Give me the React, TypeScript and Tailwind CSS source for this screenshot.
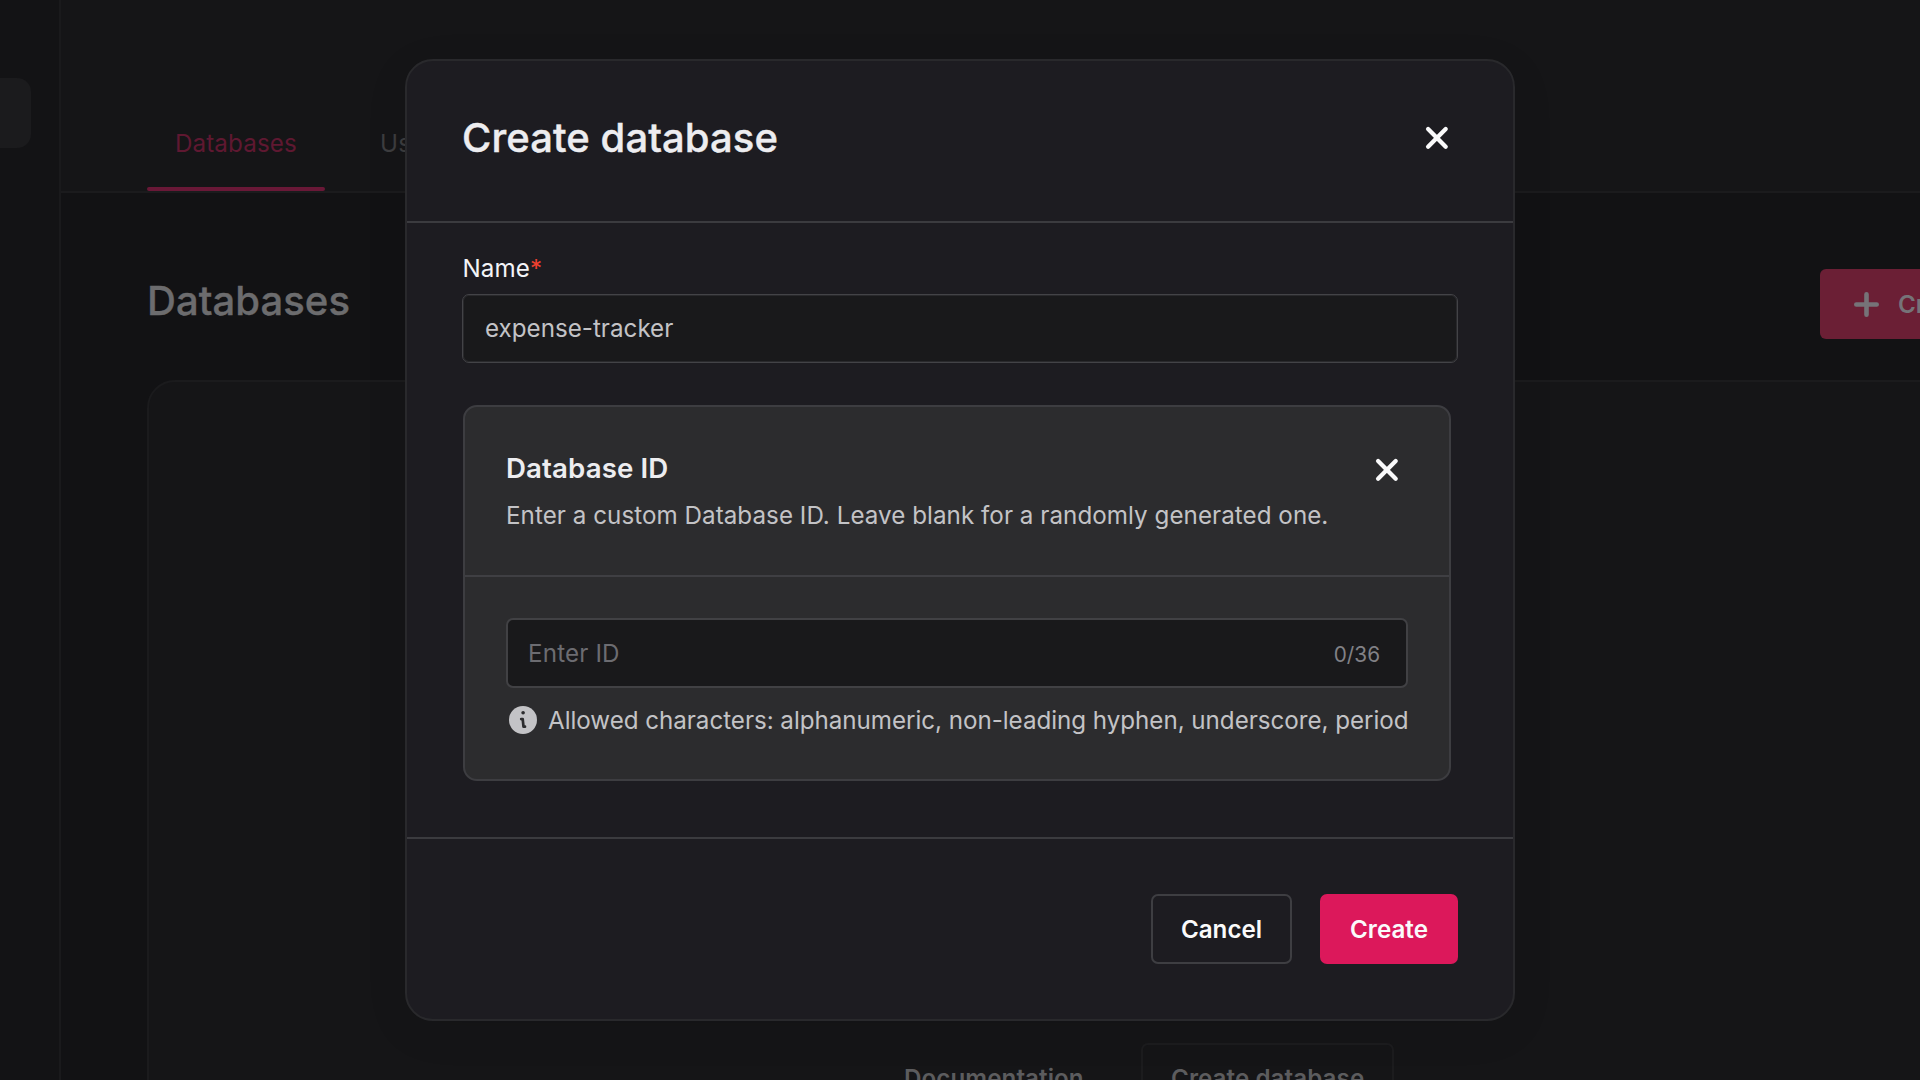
import React from 'react';

function Cross() {
  return (
    <svg width="24" height="24" viewBox="0 0 24 24" fill="none" stroke="#fafafb" strokeWidth="4.3" strokeLinecap="round">
      <path d="M3.1 3.1 20.7 20.7M20.7 3.1 3.1 20.7" />
    </svg>
  );
}

function Info() {
  return (
    <svg width="28" height="28" viewBox="0 0 28 28" fill="none">
      <circle cx="14" cy="14" r="14" fill="#c3c3c6" />
      <circle cx="14.1" cy="6.8" r="1.8" fill="#2c2c2e" />
      <path d="M12.2 13.1h1.5l.8 7.6h1.5" stroke="#2c2c2e" strokeWidth="2.7" strokeLinecap="round" strokeLinejoin="round" />
    </svg>
  );
}

function Page() {
  return (
    <div className="flex h-full w-full overflow-hidden">
      <aside className="h-full w-[61px] shrink-0 border-r-2 border-[#1a1a1c] bg-[#131315] pt-[78px]">
        <div className="h-[70px] w-[31px] rounded-r-[14px] bg-[#1b1b1d]" />
      </aside>
      <main className="flex min-w-0 flex-1 flex-col bg-[#121214]">
        <header className="flex h-[193px] shrink-0 items-end border-b-2 border-[#1b1b1d] bg-[#151517] pl-[86px]">
          <div className="flex h-[64px] w-[178px] flex-col justify-between">
            <span className="pl-[28px] text-[24.2px] leading-[34px] tracking-[0.1px] text-[#5f1831]">Databases</span>
            <span className="h-[4px] rounded-full bg-[#691837]" />
          </div>
          <span className="ml-[55px] h-[64px] text-[24.2px] leading-[34px] tracking-[0.2px] text-[#3d3d3f]">Usage</span>
        </header>
        <div className="flex h-[187px] w-[1900px] shrink-0 items-start pl-[86px]">
          <h2 className="w-[1673px] shrink-0 pt-[84px] text-[40px] leading-[48px] font-medium tracking-[0.05px] text-[#6c6c6e] [-webkit-text-stroke:0.4px_#6c6c6e]">Databases</h2>
          <button className="mt-[76px] flex h-[70px] shrink-0 items-center rounded-[6px] bg-[#6b1f35] pl-[34px] text-[24.2px] font-semibold text-[#767378]">
            <svg width="25" height="25" viewBox="0 0 25 25" fill="none" stroke="#767378" strokeWidth="4.6" strokeLinecap="round">
              <path d="M12.5 2.3v20.4M2.3 12.5h20.4" />
            </svg>
            <span className="ml-[19px] w-56 pt-[2px] text-left whitespace-nowrap">Create database</span>
          </button>
        </div>
        <section className="ml-[86px] flex h-[900px] w-[1900px] shrink-0 items-start rounded-tl-[28px] border-2 border-[#1b1b1d] bg-[#151517] pt-[661px] pl-[755px] text-[24.2px] leading-[34px] font-semibold tracking-[0.06px] text-[#5c5c5e]">
          <span className="mt-[19px] w-[237px]">Documentation</span>
          <span className="h-[70px] w-[253px] rounded-[7px] border-2 border-[#1c1c1e] pt-[17px] pl-[28px]">Create database</span>
        </section>
      </main>
    </div>
  );
}

export default function App() {
  return (
    <div className="relative h-[1080px] w-full overflow-hidden bg-[#121214] font-['Inter',sans-serif]">
      <Page />
      <div className="absolute inset-0 flex items-start justify-center pt-[59px]">
        <div className="flex h-[962px] w-[1110px] flex-col rounded-[28px] border-2 border-[#29292c] bg-[#1d1c21] shadow-[0_10px_44px_rgba(0,0,0,0.08)]">
          <div className="flex h-[162px] shrink-0 items-start justify-between border-b-2 border-[#3b3b3f] pr-[64px] pl-[55px]">
            <h1 className="mt-[53px] text-[40px] leading-[48px] font-medium tracking-[0.08px] text-[#ededf0] [-webkit-text-stroke:0.4px_#ededf0]">Create database</h1>
            <button className="mt-[65px]"><Cross /></button>
          </div>
          <div className="flex h-[616px] shrink-0 flex-col border-b-2 border-[#3b3b3f] px-[55px] pt-[29px]">
            <label className="pl-[0.5px] text-[24.2px] leading-[34px] tracking-[0.1px] text-[#f4f4f7]">
              Name<span className="text-[#f0402f]">*</span>
            </label>
            <div className="mt-[8px] flex h-[69px] items-center rounded-[7px] border border-[#434347] bg-[#19191b] pt-[2px] pl-[22px] text-[24.2px] text-[#c3c3c6] shadow-[inset_0_0_0_1px_#29292c]">
              expense-tracker
            </div>
            <div className="mt-[42px] ml-px h-[376px] w-[988px] rounded-[14px] border-2 border-[#3d3d41] bg-[#2c2c2e]">
              <div className="flex h-[170px] justify-between border-b-2 border-[#3f3f43] pt-[44px] pr-[50px] pl-[41px]">
                <div>
                  <h3 className="text-[27.65px] leading-[34px] font-semibold tracking-[0.12px] text-[#ededf0]">Database ID</h3>
                  <p className="mt-[14px] text-[24.2px] leading-[34px] tracking-[0.04px] whitespace-nowrap text-[#c3c3c6]">
                    Enter a custom Database ID. Leave blank for a randomly generated one.
                  </p>
                </div>
                <button className="mt-[7px] self-start"><Cross /></button>
              </div>
              <div className="px-[41px] pt-[41px]">
                <div className="flex h-[70px] items-center justify-between rounded-[7px] border-2 border-[#414144] bg-[#19191b] pt-[2px] pr-[26px] pl-[20px]">
                  <span className="pt-px text-[24.2px] tracking-[0.15px] text-[#6c6c71]">Enter ID</span>
                  <span className="pt-[2px] text-[20.74px] text-[#818186]">0/36</span>
                </div>
                <div className="mt-[15px] ml-[3px] flex items-start gap-[11px] text-[24.2px] leading-[34px] tracking-[-0.04px] whitespace-nowrap text-[#c3c3c6]">
                  <span className="pt-[3px]"><Info /></span>
                  <span className="pt-px">Allowed characters: alphanumeric, non-leading hyphen, underscore, period</span>
                </div>
              </div>
            </div>
          </div>
          <div className="flex justify-end gap-[28px] pt-[55px] pr-[55px] text-[24.2px] font-semibold text-[#fafafb]">
            <button className="h-[70px] w-[141px] rounded-[7px] border-2 border-[#3e3e42] pt-[2px]">Cancel</button>
            <button className="h-[70px] w-[138px] rounded-[7px] bg-[#dc185b] pt-[2px]">Create</button>
          </div>
        </div>
      </div>
    </div>
  );
}
